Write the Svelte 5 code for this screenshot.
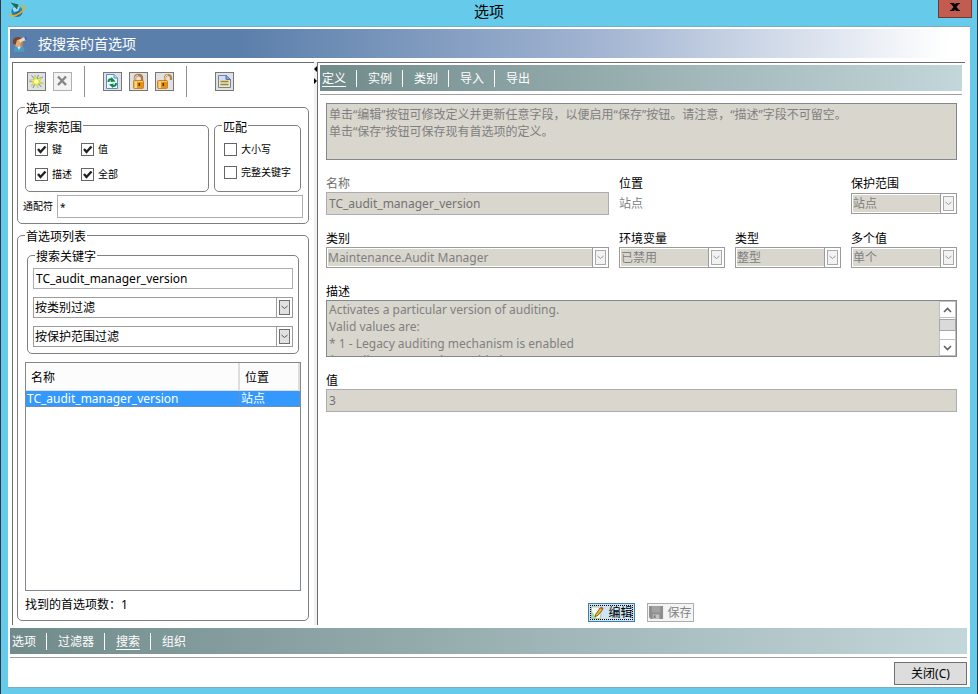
<script>
  let scopes = $state([
    { label: '键', on: true },
    { label: '值', on: true },
    { label: '描述', on: true },
    { label: '全部', on: true }
  ]);
  let matches = $state([
    { label: '大小写', on: false },
    { label: '完整关键字', on: false }
  ]);
  const detailTabs = ['定义', '实例', '类别', '导入', '导出'];
  const viewTabs = ['选项', '过滤器', '搜索', '组织'];
  let detailTab = $state('定义');
  let viewTab = $state('搜索');
  let wildcard = $state('*');
  let keyword = $state('TC_audit_manager_version');
  const hint =
    '单击“编辑”按钮可修改定义并更新任意字段，以便启用“保存”按钮。请注意，“描述”字段不可留空。\n单击“保存”按钮可保存现有首选项的定义。';
  const description =
    'Activates a particular version of auditing.\nValid values are:\n* 1 - Legacy auditing mechanism is enabled\n* 2 - All events may be enabled.';
</script>

{#snippet combo(id, value, disabled, label)}
  <div class="combo" class:disabled>
    <select {id} {disabled} aria-label={label}><option>{value}</option></select>
    <span class="drop" aria-hidden="true">
      <svg width="9" height="13" viewBox="0 0 9 13"><path d="M1.5 5 L4.5 7.5 L7.5 5" fill="none" stroke="currentColor" /></svg>
    </span>
  </div>
{/snippet}

{#snippet tabs(items, current, pick)}
  <nav class="tabs">
    {#each items as item}
      <button class="tab" class:active={item === current} onclick={() => pick(item)}>{item}</button>
    {/each}
  </nav>
{/snippet}

{#snippet checks(items)}
  {#each items as item}
    <label class="check">
      <input type="checkbox" bind:checked={item.on} />
      {#if item.on}
        <svg class="tick" width="13" height="13" viewBox="0 0 13 13"><path d="M3 6 L5.5 9 L10.5 3.5" fill="none" stroke="#222" stroke-width="2.4" /></svg>
      {/if}
      <span>{item.label}</span>
    </label>
  {/each}
{/snippet}

<div class="window">
  <header class="titlebar">
    <svg class="logo" width="17" height="17" viewBox="0 0 17 17">
      <circle cx="8" cy="9.5" r="5.6" fill="#1f86b8" />
      <path d="M3.5 6.5 Q7 3 11 5 L9 9 L5 10 Z" fill="#9fdcf2" />
      <path d="M4 13 Q9 16 13 11 L10 9 Z" fill="#15618f" />
      <path d="M1.5 0.5 L9.5 2.5 L8 7.5 Z" fill="#1d6b4c" />
      <path d="M12 4 C17 2.5 16.5 7 11 11 C6 14.5 0.5 15 1.5 11.5" fill="none" stroke="#f2a81d" stroke-width="1.6" />
    </svg>
    <h1>选项</h1>
    <button class="close-x" aria-label="关闭窗口">
      <svg width="10" height="8" viewBox="0 0 10 8"><path d="M0 0H4L5 1.5L6 0H10V1H9L6.5 4L9 7H10V8H6L5 6.5L4 8H0V7H1L3.5 4L1 1H0Z" fill="#000" /></svg>
    </button>
  </header>

  <main class="dialog">
    <div class="banner">
      <svg width="16" height="16" viewBox="0 0 16 16">
        <path d="M2 15.5 Q1.5 10 5 10 H9 Q12.5 10 12.5 15.5 Q7 17 2 15.5 Z" fill="#4b9bc0" />
        <path d="M5 10 L7 14 L9 10 Z" fill="#d8edf5" />
        <ellipse cx="6" cy="6.5" rx="3.5" ry="4.5" fill="#e2a878" />
        <path d="M1 7.5 Q0 1 6 1 Q9 1 9 3 L5 4 L3.5 9 Z" fill="#74452a" />
        <path d="M7 4 L12 1 L14 4 L8 6.5 Z" fill="#efd9b4" />
        <path d="M12.5 0.5 L15 1.5 L14.5 4 L13 4 Z" fill="#4661d6" />
        <path d="M8 8 L11 5.5 L10.5 10 L9 11.5 Z" fill="#c9875a" />
      </svg>
      <h2>按搜索的首选项</h2>
    </div>

    <div class="panes">
      <section class="left">
        <div class="toolbar">
          <button class="tool" aria-label="新建">
            <svg width="17" height="17" viewBox="0 0 17 17">
              <path d="M3.5 2.5 L13.5 14 M15 4 L1.5 9 M10.5 2 L5 15" stroke="#6fa3b8" stroke-width="1.1" />
              <path d="M7 2 L9 6 L14 4.5 L11 8.5 L15.5 10.5 L10.5 10.5 L10 15 L7.5 11 L3 13 L5.5 9 L1 7 L6 6.5 Z" fill="#f7ec3b" stroke="#a9b86a" stroke-width=".5" />
              <circle cx="8.3" cy="8.5" r="2" fill="#fffbc0" />
            </svg>
          </button>
          <button class="tool off" aria-label="删除" disabled>
            <svg width="17" height="17" viewBox="0 0 17 17"><path d="M4 3.5 L12 12 M12 3.5 L4 12" stroke="#858585" stroke-width="2.4" /></svg>
          </button>
          <i class="rule first"></i>
          <button class="tool" aria-label="刷新">
            <svg width="17" height="17" viewBox="0 0 17 17">
              <path d="M2.5 1.5 H10 L13.5 5 V15.5 H2.5 Z" fill="#eef6ff" stroke="#5b8fc9" />
              <path d="M10 1.5 V5 H13.5" fill="#bcd7f3" stroke="#5b8fc9" />
              <path d="M4.5 9 Q4.5 5.5 8 6.5" fill="none" stroke="#0d8a3a" stroke-width="2" />
              <path d="M7.5 4 L11.5 8.5 L6.5 9 Z" fill="#0d8a3a" />
              <path d="M12 10 Q12 13.5 8.5 13" fill="none" stroke="#0d8a3a" stroke-width="2" />
              <path d="M9 15 L5 11.5 L9.5 10.5 Z" fill="#0d8a3a" />
            </svg>
          </button>
          <button class="tool" aria-label="锁定">
            <svg width="17" height="17" viewBox="0 0 17 17">
              <path d="M5 8 V5 Q5 2 8.5 2 Q12 2 12 5 V8" fill="none" stroke="#b07a45" stroke-width="2.4" />
              <path d="M5 8 V5 Q5.2 2.4 8 2.2" fill="none" stroke="#f3dcb8" />
              <rect x="3.5" y="7.5" width="10" height="8" rx="1" fill="#ea920e" stroke="#b9701a" stroke-width=".7" />
              <path d="M4.5 8 H7 V15 H4.5 Z" fill="#ffd97f" />
              <path d="M4 8 H13 V9 H4 Z" fill="#f9c562" />
              <path d="M8.5 10 h1.6 v3 h-1.6 Z" fill="#513003" />
            </svg>
          </button>
          <button class="tool" aria-label="解锁">
            <svg width="17" height="17" viewBox="0 0 17 17">
              <path d="M9 8 V5 Q9 2 12 2 Q15 2 15 5 V7" fill="none" stroke="#b9803e" stroke-width="2.2" />
              <path d="M9 7 V5 Q9.2 2.2 12 1.8" fill="none" stroke="#f7dfae" />
              <rect x="1.5" y="7.5" width="10" height="8" rx="1" fill="#ea920e" stroke="#b9701a" stroke-width=".7" />
              <path d="M2.5 8 H5 V15 H2.5 Z" fill="#ffd97f" />
              <path d="M2 8 H11 V9 H2 Z" fill="#f9c562" />
              <path d="M6.5 10 h1.6 v3 h-1.6 Z" fill="#513003" />
            </svg>
          </button>
          <i class="rule second"></i>
          <button class="tool" aria-label="报告">
            <svg width="17" height="17" viewBox="0 0 17 17">
              <path d="M2.5 2.5 H10 L14.5 6.5 V14.5 H2.5 Z" fill="#f3e9a0" stroke="#6d82b8" />
              <path d="M3 3 H10 V7 H3 Z" fill="#d4def2" />
              <path d="M10 2.5 V6.5 H14.5 Z" fill="#93a6d6" stroke="#5b71b0" />
              <path d="M4.5 8.5 H12.5 M4.5 11.5 H12.5" stroke="#8d8560" stroke-width="1.4" />
            </svg>
          </button>
        </div>

        <fieldset class="options">
          <legend>选项</legend>
          <div class="groups">
            <fieldset class="scope">
              <legend>搜索范围</legend>
              <div class="scope-grid">{@render checks(scopes)}</div>
            </fieldset>
            <fieldset class="match">
              <legend>匹配</legend>
              <div class="match-list">{@render checks(matches)}</div>
            </fieldset>
          </div>
          <div class="wild">
            <label for="wildcard">通配符</label>
            <input id="wildcard" class="text small" bind:value={wildcard} />
          </div>
        </fieldset>

        <fieldset class="list">
          <legend>首选项列表</legend>
          <fieldset class="keywords">
            <legend>搜索关键字</legend>
            <div class="stack">
              <input class="text" aria-label="搜索关键字" bind:value={keyword} />
              {@render combo('by-category', '按类别过滤', false, '按类别过滤')}
              {@render combo('by-scope', '按保护范围过滤', false, '按保护范围过滤')}
            </div>
          </fieldset>
          <div class="results">
            <table>
              <thead><tr><th scope="col">名称</th><th scope="col" class="place">位置</th></tr></thead>
              <tbody><tr><td>TC_audit_manager_version</td><td>站点</td></tr></tbody>
            </table>
          </div>
          <p class="count">找到的首选项数：1</p>
        </fieldset>
      </section>

      <div class="sash" aria-hidden="true">
        <svg width="3" height="20" viewBox="0 0 3 20"><path d="M3 0 V6 L0 3 Z M0 12 L3 15 L0 18 Z" fill="#000" /></svg>
      </div>

      <section class="right">
        {@render tabs(detailTabs, detailTab, (t) => (detailTab = t))}
        <div class="form">
          <textarea class="hint" aria-label="说明" disabled value={hint}></textarea>
          <div class="fields">
            <div class="field">
              <label class="dim" for="name">名称</label>
              <input id="name" class="text" disabled value="TC_audit_manager_version" />
            </div>
            <div class="field">
              <span class="caption">位置</span>
              <span class="static">站点</span>
            </div>
            <div class="field last">
              <label for="protect">保护范围</label>
              {@render combo('protect', '站点', true)}
            </div>
            <div class="field">
              <label for="category">类别</label>
              {@render combo('category', 'Maintenance.Audit Manager', true)}
            </div>
            <div class="field">
              <label for="env">环境变量</label>
              {@render combo('env', '已禁用', true)}
            </div>
            <div class="field">
              <label for="type">类型</label>
              {@render combo('type', '整型', true)}
            </div>
            <div class="field">
              <label for="multi">多个值</label>
              {@render combo('multi', '单个', true)}
            </div>
          </div>
          <div class="field">
            <label for="desc">描述</label>
            <div class="scrolled">
              <textarea id="desc" disabled value={description}></textarea>
              <div class="bar">
                <button aria-label="向上滚动"><svg width="9" height="6" viewBox="0 0 9 6"><path d="M1 5 L4.5 1.5 L8 5" fill="none" stroke="#606060" stroke-width="1.6" /></svg></button>
                <i class="thumb"></i>
                <button aria-label="向下滚动"><svg width="9" height="6" viewBox="0 0 9 6"><path d="M1 1 L4.5 4.5 L8 1" fill="none" stroke="#606060" stroke-width="1.6" /></svg></button>
              </div>
            </div>
          </div>
          <div class="field">
            <label for="value">值</label>
            <input id="value" class="text" disabled value="3" />
          </div>
          <div class="actions">
            <button class="act edit">
              <svg width="15" height="15" viewBox="0 0 16 16">
                <path d="M1.5 2 H8 L11.5 5 V14.5 H1.5 Z" fill="#f4fbf0" stroke="#a9bfa8" />
                <path d="M2 7 L7 14 H2 Z" fill="#a4dc92" />
                <path d="M6 10 L11 3 L13.5 5 L8.5 11 L5.5 12.5 Z" fill="#f7b52a" stroke="#5a3c10" stroke-width=".8" />
                <path d="M11 3 L12.3 1.5 L14.5 3.5 L13.5 5 Z" fill="#dd4b39" />
              </svg>
              <span>编辑</span>
            </button>
            <button class="act save" disabled>
              <svg width="15" height="15" viewBox="0 0 16 16">
                <path d="M0 1 H15 V15 H2 L0 13 Z" fill="#8e8e8e" />
                <path d="M3 1 H12 V8 H3 Z" fill="#a2a2a2" />
                <path d="M4 10 H11 V15 H4 Z" fill="#c2c2c2" />
                <path d="M5 11 H7 V14 H5 Z" fill="#7b7b7b" />
              </svg>
              <span>保存</span>
            </button>
          </div>
        </div>
      </section>
    </div>

    <div class="views">{@render tabs(viewTabs, viewTab, (t) => (viewTab = t))}</div>
    <footer><button class="close">关闭(C)</button></footer>
  </main>
</div>

<style>
  .window, .window :global(*) { box-sizing: border-box; }
  .window {
    display: flex;
    flex-direction: column;
    min-height: 100vh;
    padding: 0 7px 6px;
    background: #66cbea;
    border: solid #2f3a44;
    border-width: 0 1px;
    color: #000;
    font: 12px/17px "Noto Sans", "Noto Sans CJK SC", sans-serif;
  }
  button, input, select, textarea { margin: 0; font: inherit; color: inherit; border-radius: 0; }
  button { padding: 0; background: none; border: 0; }
  h1, h2, p { margin: 0; font-weight: 400; }
  svg { display: block; flex: none; }

  .titlebar { display: grid; grid-template-columns: 60px 1fr 60px; height: 26px; }
  .logo { margin: 2px 0 0 1px; }
  h1 { font-size: 15px; line-height: 22px; text-align: center; }
  .close-x {
    display: grid;
    place-items: center;
    justify-self: end;
    width: 34px;
    height: 18px;
    margin-right: -2px;
    padding-bottom: 3px;
    background: #c25b50;
    border: 1px solid #6e3833;
    border-top: 0;
  }

  .dialog {
    flex: 1;
    display: flex;
    flex-direction: column;
    padding: 2px 3px 2px 2px;
    background: #fff;
    border: solid #78aec0;
    border-width: 1px 0;
  }
  .banner {
    display: flex;
    align-items: center;
    gap: 10px;
    height: 29px;
    padding-left: 2px;
    background: linear-gradient(90deg, #5b7fab 24%, #a3b5d2 62%, #fff 98%);
    color: #fff;
  }
  h2 { font-size: 14px; line-height: 20px; }

  .panes { flex: 1; display: flex; margin: 4px 2px 3px; }
  .left {
    display: flex;
    flex-direction: column;
    flex: 0 0 302px;
    padding: 0 5px 4px 4px;
    border: solid #6d6d6d;
    border-width: 1px 0 0 1px;
  }
  .sash { flex: 0 0 3px; padding-top: 4px; background: #f0f0f0; }
  .right {
    flex: 1;
    display: flex;
    flex-direction: column;
    padding: 2px 3px 3px 2px;
    border: solid #6d6d6d;
    border-width: 1px 0 0 1px;
  }

  .toolbar { display: flex; align-items: center; gap: 7px; height: 36px; padding-left: 10px; }
  .tool { display: grid; place-items: center; width: 19px; height: 19px; background: #e1e1e1; border: 1px solid #777; }
  .tool.off { background: #f3f3f3; border-color: #b0b0b0; }
  .rule { width: 1px; height: 31px; background: #8f8f8f; }
  .rule.first { margin: 0 11px 0 5px; }
  .rule.second { margin: 0 21px 0 5px; }

  fieldset { min-width: 0; margin: 0; padding: 0; border: 1px solid #7f7f7f; border-radius: 5px; }
  legend { height: 17px; margin-left: 7px; padding: 0 1px; line-height: 19px; }
  .options { padding: 1px 5px 5px; }
  .options > legend { margin-left: 2px; }
  .list > legend { margin-left: 0; }
  .groups { display: grid; grid-template-columns: 184px 1fr; gap: 5px; margin: 0 2px; }
  .groups legend { line-height: 21px; }
  .scope-grid { display: grid; grid-template-columns: 46px 1fr; row-gap: 12px; padding: 9px 0 10px 9px; }
  .match-list { display: grid; row-gap: 10px; padding: 9px 0 12px 9px; }
  .check { position: relative; display: flex; align-items: center; gap: 4px; height: 13px; font-size: 10px; line-height: 13px; white-space: nowrap; }
  .check input { appearance: none; flex: none; width: 13px; height: 13px; background: #fff; border: 1px solid #666; }
  .tick { position: absolute; left: 0; top: 0; pointer-events: none; }
  .wild { display: flex; align-items: center; gap: 4px; margin-top: 3px; font-size: 10px; white-space: nowrap; }
  .wild label { flex: none; }

  .text { width: 100%; min-width: 0; height: 23px; padding: 0 2px; background: #fff; border: 1px solid #abadb3; }
  .text:disabled { background: #d9d6ce; color: #737373; }

  .list { flex: 1; display: flex; flex-direction: column; margin-top: 3px; padding: 3px 7px 7px; }
  .keywords { margin: 0 2px; }
  .stack { display: grid; gap: 8px; padding: 4px 5px 6px; }
  .stack .text { height: 21px; }

  .combo { position: relative; height: 21px; padding: 1px; background: #fff; border: 1px solid #9b9b9b; }
  .combo select { appearance: none; display: block; width: 100%; height: 17px; padding: 0 18px 0 0; background: #fff; border: 0; opacity: 1; line-height: 17px; }
  .disabled select { background: linear-gradient(#d9d6ce, #d9d6ce) 0 0 / calc(100% - 15px) 100% no-repeat; color: #808080; }
  .drop { position: absolute; top: 0; right: 0; height: 19px; padding: 2px; background: #fff; border-left: 1px solid #9b9b9b; pointer-events: none; color: #555; }
  .drop svg { width: 11px; height: 15px; background: #e1e1e1; border: 1px solid #707070; }
  .disabled .drop { color: #999; }
  .disabled .drop svg { background: #f2f2f2; border-color: #aaa; }

  .results { flex: 1; margin-top: 8px; border: 1px solid #828790; }
  table { width: 100%; border-spacing: 0; table-layout: fixed; }
  th { height: 28px; padding: 2px 0 0 5px; background: #fcfcfc; border: solid #dedede; border-width: 0 2px 1px 0; font-weight: 400; text-align: left; }
  th.place { width: 60px; }
  td { height: 16px; padding: 0 1px; background: #39f; border-right: 1px solid #5b93cc; border-bottom: 1px solid #6f8fae; color: #fff; line-height: 15px; }
  .count { margin-top: 5px; }

  .tabs { display: flex; height: 26px; padding: 5px 2px 4px; background: linear-gradient(90deg, #718b8b, #c3d6d9); color: #fff; }
  .tab { height: 17px; padding-top: 2px; border-bottom: 1px solid transparent; line-height: 14px; }
  .tab.active { border-color: #fff; }
  .tab + .tab { position: relative; margin-left: 22px; }
  .tab + .tab::before { content: ""; position: absolute; top: 0; left: -12px; width: 1px; height: 17px; background: #fff; }

  .form { flex: 1; display: flex; flex-direction: column; gap: 15px; margin-top: 3px; padding: 8px 5px 0 6px; border-top: 1px solid #a0a0a0; }
  textarea { display: block; width: 100%; height: 57px; padding: 0 2px; background: #d9d6ce; border: 1px solid #828790; color: #808080; line-height: 17px; resize: none; overflow: hidden; }
  .hint { padding-top: 2px; }
  .fields { display: grid; grid-template-columns: 1fr 106px 106px 106px; gap: 15px 10px; }
  .field { display: flex; flex-direction: column; min-width: 0; }
  .field label, .caption { height: 17px; }
  .field .dim { color: #6d6d6d; }
  .field.last { grid-column: 4; }
  .fields .last .combo { margin-top: 1px; }
  .static { line-height: 23px; color: #808080; }
  .scrolled { display: flex; height: 57px; border: 1px solid #828790; }
  .scrolled textarea { flex: 1; height: 55px; border: 0; }
  .bar { display: flex; flex-direction: column; justify-content: space-between; width: 17px; background: #fff; border: 1px solid #c0c0c0; }
  .bar button { display: grid; place-items: center; height: 16px; border-bottom: 1px solid #c0c0c0; }
  .bar button:last-child { border-top: 1px solid #c0c0c0; border-bottom: 0; }
  .thumb { height: 12px; margin: 0 -1px 7px; background: #dadada; border: 1px solid #a6a6a6; }

  .actions { display: flex; justify-content: center; gap: 12px; margin-top: auto; padding-right: 2px; }
  .act { display: flex; align-items: center; gap: 4px; width: 47px; height: 19px; padding-left: 1px; border: 1px solid #adadad; white-space: nowrap; line-height: 17px; }
  .edit { background: #cbe5f2; border-color: #3c7fb1; outline: 1px dotted #000; outline-offset: -3px; }
  .save { background: #f4f4f4; color: #838383; }

  .views { padding-bottom: 3px; border-bottom: 1px solid #a0a0a0; }
  footer { display: flex; justify-content: flex-end; padding-top: 4px; }
  .close { width: 73px; height: 23px; background: #ddd; border: 1px solid #707070; }
</style>
